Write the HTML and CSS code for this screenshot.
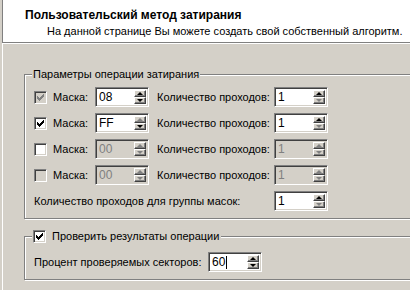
FILE: index.html
```html
<!DOCTYPE html>
<html lang="ru">
<head>
    <meta charset="UTF-8">
    <title>Пользовательский метод затирания</title>
    <link rel="stylesheet" href="styles.css">
</head>
<body>
    <div class="wizard">
        <div class="header">
            <div class="title">Пользовательский метод затирания</div>
            <div class="subtitle">На данной странице Вы можете создать свой собственный алгоритм.</div>
        </div>

        <div class="page">
            <!-- Mask parameters -->
            <div class="group">
                <div class="legend">Параметры операции затирания</div>

                <div class="row">
                    <span class="check disabled checked"><svg width="7" height="7" viewBox="0 0 7 7"><path d="M0 2L2 4L7 -1V2L2 7L0 5Z"/></svg></span>
                    <span class="label mask-label">Маска:</span>
                    <span class="spin">
                        <span class="value">08</span>
                        <span class="arrows"><span class="btn up"></span><span class="btn down"></span></span>
                    </span>
                    <span class="label pass-label">Количество проходов:</span>
                    <span class="spin">
                        <span class="value">1</span>
                        <span class="arrows"><span class="btn up"></span><span class="btn down off"></span></span>
                    </span>
                </div>

                <div class="row">
                    <span class="check checked"><svg width="7" height="7" viewBox="0 0 7 7"><path d="M0 2L2 4L7 -1V2L2 7L0 5Z"/></svg></span>
                    <span class="label mask-label">Маска:</span>
                    <span class="spin">
                        <span class="value">FF</span>
                        <span class="arrows"><span class="btn up off"></span><span class="btn down"></span></span>
                    </span>
                    <span class="label pass-label">Количество проходов:</span>
                    <span class="spin">
                        <span class="value">1</span>
                        <span class="arrows"><span class="btn up"></span><span class="btn down off"></span></span>
                    </span>
                </div>

                <div class="row">
                    <span class="check"></span>
                    <span class="label mask-label">Маска:</span>
                    <span class="spin disabled">
                        <span class="value">00</span>
                        <span class="arrows"><span class="btn up off"></span><span class="btn down off"></span></span>
                    </span>
                    <span class="label pass-label">Количество проходов:</span>
                    <span class="spin disabled">
                        <span class="value">1</span>
                        <span class="arrows"><span class="btn up off"></span><span class="btn down off"></span></span>
                    </span>
                </div>

                <div class="row">
                    <span class="check disabled"></span>
                    <span class="label mask-label">Маска:</span>
                    <span class="spin disabled">
                        <span class="value">00</span>
                        <span class="arrows"><span class="btn up off"></span><span class="btn down off"></span></span>
                    </span>
                    <span class="label pass-label">Количество проходов:</span>
                    <span class="spin disabled">
                        <span class="value">1</span>
                        <span class="arrows"><span class="btn up off"></span><span class="btn down off"></span></span>
                    </span>
                </div>

                <div class="row">
                    <span class="label group-label">Количество проходов для группы масок:</span>
                    <span class="spin">
                        <span class="value">1</span>
                        <span class="arrows"><span class="btn up"></span><span class="btn down off"></span></span>
                    </span>
                </div>
            </div>

            <!-- Verification -->
            <div class="group verify">
                <div class="legend">
                    <span class="check checked"><svg width="7" height="7" viewBox="0 0 7 7"><path d="M0 2L2 4L7 -1V2L2 7L0 5Z"/></svg></span>
                    <span>Проверить результаты операции</span>
                </div>

                <div class="row">
                    <span class="label percent-label">Процент проверяемых секторов:</span>
                    <span class="spin">
                        <span class="value">60<span class="caret"></span></span>
                        <span class="arrows"><span class="btn up"></span><span class="btn down"></span></span>
                    </span>
                </div>
            </div>
        </div>
    </div>
</body>
</html>
```

FILE: styles.css
```css
html, body {
    margin: 0;
    padding: 0;
    background-color: #d4d0c8;
    overflow: hidden;
}
body {
    width: 410px;
    height: 290px;
    font-family: "Liberation Sans", Arial, sans-serif;
    font-size: 11px;
    color: #000;
}
.wizard {
    margin-left: 2px;
    height: 290px;
    border-left: 1px solid #ffffff;
}
.header {
    background-color: #ffffff;
    height: 42px;
    border-bottom: 1px solid #808080;
    box-shadow: 0 1px 0 #ffffff;
    margin-left: -1px;
    border-left: 1px solid #808080;
}
.title {
    font-weight: bold;
    font-size: 12px;
    padding: 9px 0 0 22px;
    line-height: 13px;
}
.subtitle {
    padding: 3px 0 0 44px;
    line-height: 13px;
}
.page {
    padding: 31px 0 8px 21px;
    overflow: hidden;
}
/* right edge of the boxes sits just past the window edge */
.group {
    margin-right: -3px;
    border: 1px solid #808080;
    box-shadow: inset 1px 1px 0 #ffffff, 1px 1px 0 #ffffff;
    padding: 0 0 7px 9px;
    display: flex;
    flex-direction: column;
    gap: 6px;
}
.group.verify {
    margin-top: 17px;
    padding-bottom: 7px;
}
.legend {
    align-self: flex-start;
    margin: -7px 0 0 -2px;
    padding: 0 1px;
    height: 13px;
    line-height: 13px;
    background-color: #d4d0c8;
    display: flex;
    align-items: center;
    gap: 6px;
}
.verify .legend {
    padding-right: 2px;
}
.verify .row {
    margin-top: 3px;
}
.row {
    display: flex;
    align-items: center;
    height: 20px;
}
.label {
    white-space: nowrap;
}
.mask-label {
    width: 42px;
    margin-left: 6px;
}
.pass-label {
    width: 117px;
    margin-left: 8px;
}
.group-label {
    width: 240px;
}
.percent-label {
    width: 174px;
}
.check {
    box-sizing: border-box;
    width: 13px;
    height: 13px;
    flex: none;
    border: 1px solid;
    border-color: #808080 #ffffff #ffffff #808080;
    box-shadow: inset 1px 1px 0 #404040, inset -1px -1px 0 #d4d0c8;
    background-color: #ffffff;
    display: flex;
    align-items: center;
    justify-content: center;
}
.check svg {
    display: none;
    shape-rendering: crispEdges;
    fill: #000;
}
.check.checked svg {
    display: block;
}
.check.disabled {
    background-color: #d4d0c8;
}
.check.disabled svg {
    fill: #808080;
}
.spin {
    box-sizing: border-box;
    width: 54px;
    height: 20px;
    flex: none;
    border: 1px solid;
    border-color: #808080 #ffffff #ffffff #808080;
    box-shadow: inset 1px 1px 0 #404040, inset -1px -1px 0 #d4d0c8;
    background-color: #ffffff;
    display: flex;
    padding: 2px;
}
.spin .value {
    flex: 1;
    font-size: 12px;
    line-height: 16px;
    padding-left: 1px;
    display: flex;
    align-items: center;
}
.spin.disabled {
    background-color: #d4d0c8;
}
.spin.disabled .value {
    color: #808080;
}
.caret {
    width: 1px;
    height: 13px;
    background-color: #000;
    margin-left: 1px;
}
.arrows {
    width: 12px;
    display: flex;
    flex-direction: column;
}
.btn {
    box-sizing: border-box;
    height: 8px;
    background-color: #d4d0c8;
    border: 1px solid;
    border-color: #ffffff #404040 #404040 #ffffff;
    box-shadow: inset -1px -1px 0 #808080;
    display: flex;
    align-items: center;
    justify-content: center;
}
.btn::after {
    content: "";
    width: 0;
    height: 0;
    border-left: 3px solid transparent;
    border-right: 3px solid transparent;
}
.btn.up::after {
    border-bottom: 3px solid #000;
}
.btn.down::after {
    border-top: 3px solid #000;
}
.btn.up.off::after {
    border-bottom-color: #808080;
}
.btn.down.off::after {
    border-top-color: #808080;
}
```
